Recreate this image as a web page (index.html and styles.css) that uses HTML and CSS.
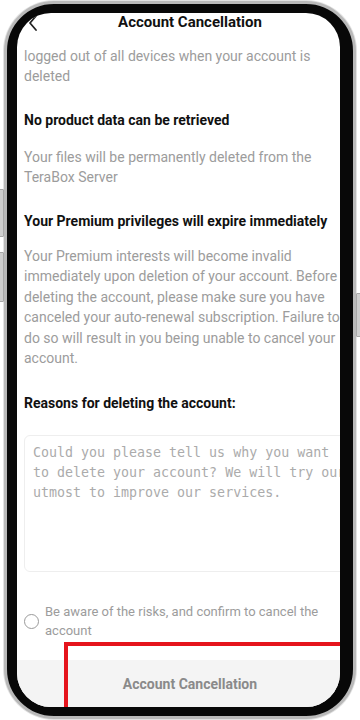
FILE: index.html
```html
<!DOCTYPE html>
<html lang="en">
<head>
<meta charset="utf-8">
<title>Account Cancellation</title>
<link rel="stylesheet" href="styles.css">
</head>
<body>
<div class="phone">
  <span class="side-btn side-btn-l1"></span>
  <span class="side-btn side-btn-l2"></span>
  <span class="side-btn side-btn-r1"></span>
  <div class="screen">
    <div class="app">
      <header class="topbar">
        <svg class="back" width="12" height="20" viewBox="0 0 12 20"><path d="M8 2 L2 9 L8 16" fill="none" stroke="#222" stroke-width="1.8" stroke-linecap="round" stroke-linejoin="round"/></svg>
        <h1 class="title">Account Cancellation</h1>
      </header>
      <p class="desc desc-first">logged out of all devices when your account is deleted</p>
      <h2 class="heading heading-a">No product data can be retrieved</h2>
      <p class="desc desc-files">Your files will be permanently deleted from the TeraBox Server</p>
      <h2 class="heading heading-b">Your Premium privileges will expire immediately</h2>
      <p class="desc desc-premium">Your Premium interests will become invalid immediately upon deletion of your account. Before deleting the account, please make sure you have canceled your auto-renewal subscription. Failure to do so will result in you being unable to cancel your account.</p>
      <h2 class="heading heading-c">Reasons for deleting the account:</h2>
      <div class="reason-box">Could you please tell us why you want to delete your account? We will try our utmost to improve our services.</div>
      <label class="confirm">
        <span class="radio"></span>
        <span class="confirm-text">Be aware of the risks, and confirm to cancel the account</span>
      </label>
      <div class="action">
        <span class="action-label">Account Cancellation</span>
      </div>
    </div>
    <div class="highlight"></div>
  </div>
</div>
</body>
</html>
```
FILE: styles.css
```css
html, body {
  margin: 0;
  padding: 0;
  background: #ffffff;
  overflow: hidden;
}

body {
  width: 360px;
  height: 720px;
  font-family: Roboto, "Liberation Sans", Arial, sans-serif;
}

.phone {
  position: relative;
  box-sizing: border-box;
  width: 352px;
  height: 718px;
  margin: 1px 0 0 4px;
  border: 3px solid #b9b9b9;
  border-radius: 50px;
  background: #080808;
  padding: 9px 13px 9px 10px;
  box-shadow: 0 0 0 1px #e2e2e2;
}

.side-btn {
  position: absolute;
  width: 3px;
  background: #cfcfcf;
  border: 1px solid #a8a8a8;
  border-radius: 1px;
}
.side-btn-l1 { left: -8px; top: 185px; height: 46px; }
.side-btn-l2 { left: -8px; top: 248px; height: 48px; }
.side-btn-r1 { right: -8px; top: 289px; height: 42px; }

.screen {
  position: relative;
  width: 323px;
  height: 694px;
  border-radius: 34px;
  overflow: hidden;
  background: #ffffff;
}

.app {
  width: 346px;
  display: flex;
  flex-direction: column;
}

.topbar {
  position: relative;
  height: 19px;
  display: flex;
  align-items: center;
  justify-content: center;
}

.back {
  position: absolute;
  left: 11px;
  top: 1px;
}

.title {
  margin: 0;
  font-size: 15px;
  line-height: 19px;
  font-weight: 700;
  color: #111111;
}

.desc {
  margin: 0;
  padding: 0 7px;
  font-size: 14px;
  line-height: 20px;
  color: #9c9c9c;
}

.desc-first { margin-top: 14px; }
.desc-files { margin-top: 17px; }
.desc-premium { margin-top: 15px; line-height: 20.4px; }

.heading {
  margin: 0;
  padding: 0 7px;
  font-size: 14px;
  line-height: 20px;
  font-weight: 700;
  color: #111111;
}

.heading-a { margin-top: 24px; }
.heading-b { margin-top: 24px; }
.heading-c { margin-top: 25px; }

.reason-box {
  box-sizing: border-box;
  margin: 22px 7px 0 7px;
  height: 137px;
  border: 1px solid #eeeeee;
  border-radius: 6px;
  padding: 7px 8px;
  font-family: "DejaVu Sans Mono", "Liberation Mono", monospace;
  font-size: 13.3px;
  line-height: 20px;
  color: #ababab;
}

.confirm {
  margin-top: 30px;
  padding: 0 7px;
  display: flex;
  align-items: center;
  gap: 6px;
}

.radio {
  flex: none;
  box-sizing: border-box;
  width: 15px;
  height: 15px;
  border: 1.5px solid #9a9a9a;
  border-radius: 50%;
}

.confirm-text {
  max-width: 296px;
  font-size: 13px;
  line-height: 19px;
  color: #9c9c9c;
}

.action {
  margin-top: 20px;
  height: 60px;
  background: #f4f4f4;
  display: flex;
  justify-content: center;
}

.action-label {
  line-height: 48px;
  font-size: 14px;
  font-weight: 700;
  color: #8a8a8a;
}

.highlight {
  position: absolute;
  left: 47px;
  top: 629px;
  width: 300px;
  height: 80px;
  border: 4px solid #e5141c;
}
```
